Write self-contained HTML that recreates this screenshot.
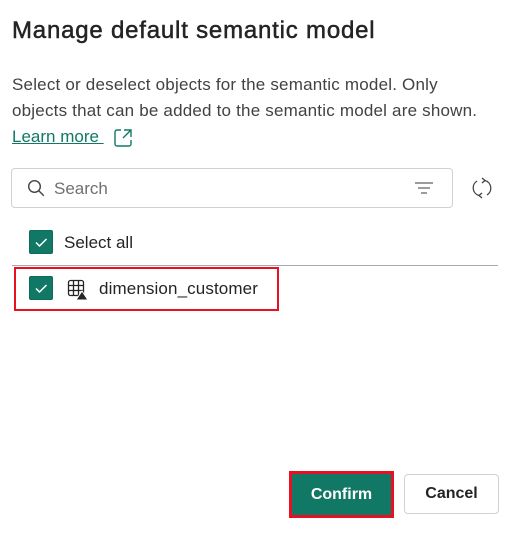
<!DOCTYPE html>
<html><head><style>
*{margin:0;padding:0;box-sizing:border-box}
body{width:522px;height:538px;background:#fff;font-family:"Liberation Sans",sans-serif;color:#242424;position:relative;overflow:hidden}
.abs{position:absolute}
.cb{position:absolute;width:24px;height:24px;background:#117865;border-radius:2px;border:1px solid #0e6b5a}
</style></head><body>
<div class="abs" style="left:12px;top:17px;font-size:24px;letter-spacing:0.8px;-webkit-text-stroke:0.5px #242424;white-space:nowrap">Manage default semantic model</div>
<div class="abs" style="left:12px;top:72px;font-size:17px;line-height:26px;color:#424242;width:510px;letter-spacing:0.2px;white-space:nowrap">Select or deselect objects for the semantic model. Only<br>objects that can be added to the semantic model are shown.<br><span style="color:#117865;text-decoration:underline;letter-spacing:0">Learn more&nbsp;</span></div>
<svg class="abs" style="left:113px;top:128px" width="20" height="20" viewBox="0 0 20 20" fill="none" stroke="#117865" stroke-width="1.4"><path d="M8 2H4a2 2 0 0 0-2 2v12a2 2 0 0 0 2 2h12a2 2 0 0 0 2-2v-4"/><path d="M11 2h7v7M18 2l-8 8"/></svg>
<div class="abs" style="left:11px;top:168px;width:442px;height:40px;border:1px solid #d1d1d1;border-radius:4px"></div>
<svg class="abs" style="left:27px;top:179px" width="18" height="18" viewBox="0 0 18 18" fill="none" stroke="#424242" stroke-width="1.4"><circle cx="7.5" cy="7.5" r="5.8"/><path d="M11.8 11.8l5 5"/></svg>
<div class="abs" style="left:54px;top:179px;font-size:17px;color:#707070">Search</div>
<svg class="abs" style="left:414px;top:180px" width="20" height="16" viewBox="0 0 20 16" stroke="#616161" stroke-width="1.3"><path d="M1 3h18M4 8h12M7 13h6"/></svg>
<svg class="abs" style="left:471px;top:176px" width="22" height="24" viewBox="0 0 22 24" fill="none" stroke="#424242" stroke-width="1.3"><path d="M6 5A8 8 0 0 0 8 19.5"/><path d="M16 19A8 8 0 0 0 14 4.5"/><path d="M11 2l3 2.5-3 2.5M11 22l-3-2.5 3-2.5"/></svg>
<div class="cb" style="left:29px;top:230px"><svg width="22" height="22" viewBox="0 0 22 22" fill="none" stroke="#fff" stroke-width="1.5"><path d="M6 11.5l3.5 3.5 7-7"/></svg></div>
<div class="abs" style="left:64px;top:233px;font-size:17px">Select all</div>
<div class="abs" style="left:12px;top:265px;width:486px;height:1px;background:#a8a8a8"></div>
<div class="abs" style="left:14px;top:267px;width:265px;height:44px;border:2px solid #e81123"></div>
<div class="cb" style="left:29px;top:276px"><svg width="22" height="22" viewBox="0 0 22 22" fill="none" stroke="#fff" stroke-width="1.5"><path d="M6 11.5l3.5 3.5 7-7"/></svg></div>
<svg class="abs" style="left:67px;top:279px" width="22" height="22" viewBox="0 0 22 22" fill="none" stroke="#242424" stroke-width="1.3"><rect x="1.5" y="1.5" width="15" height="15" rx="2"/><path d="M1.5 6.5h15M1.5 11.5h15M6.5 1.5v15M11.5 1.5v15"/><path d="M15 12l6 9H9z" fill="#242424" stroke="#fff" stroke-width="1"/></svg>
<div class="abs" style="left:99px;top:279px;font-size:17px;letter-spacing:0.12px">dimension_customer</div>
<div class="abs" style="left:289px;top:471px;width:105px;height:47px;border:3px solid #e81123"></div>
<div class="abs" style="left:292px;top:474px;width:99px;height:41px;background:#117865;color:#fff;font-weight:bold;font-size:16px;line-height:41px;text-align:center">Confirm</div>
<div class="abs" style="left:404px;top:474px;width:95px;height:40px;border:1px solid #d1d1d1;border-radius:4px;font-weight:bold;font-size:16px;line-height:38px;text-align:center">Cancel</div>
</body></html>
